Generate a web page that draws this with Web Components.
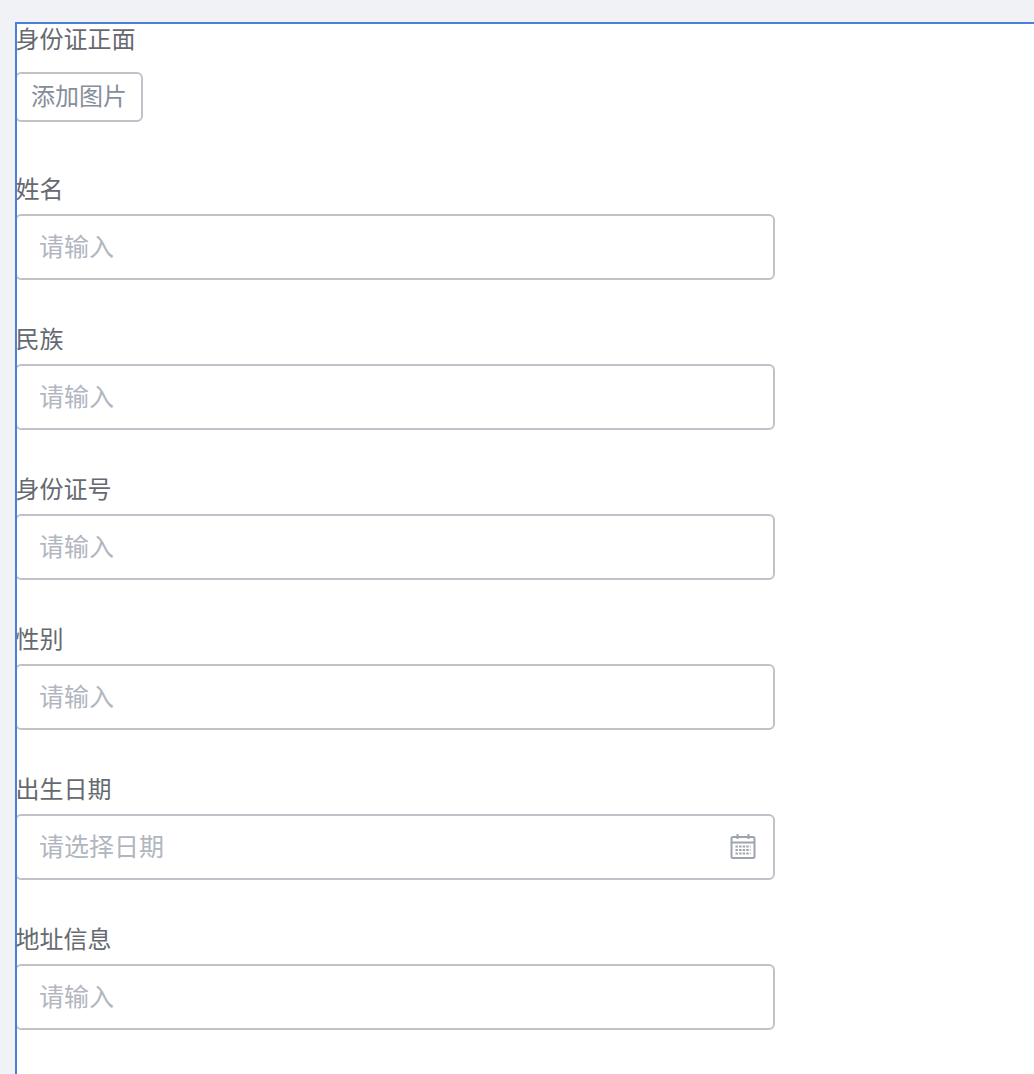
<!DOCTYPE html>
<html lang="zh">
<head>
<meta charset="utf-8">
<title>身份信息</title>
<style>
    html, body {
        margin: 0;
        height: 100%;
        overflow: hidden;
        background: #f1f2f5;
    }
    body {
        padding: 22px 0 0 15px;
        box-sizing: border-box;
        font-family: "Liberation Sans", "Noto Sans CJK SC", sans-serif;
    }
</style>
</head>
<body>
<id-form>
    <form-row label="身份证正面" class="first"><upload-button>添加图片</upload-button></form-row>
    <form-row label="姓名"><text-field placeholder="请输入"></text-field></form-row>
    <form-row label="民族"><text-field placeholder="请输入"></text-field></form-row>
    <form-row label="身份证号"><text-field placeholder="请输入"></text-field></form-row>
    <form-row label="性别"><text-field placeholder="请输入"></text-field></form-row>
    <form-row label="出生日期"><text-field placeholder="请选择日期" date></text-field></form-row>
    <form-row label="地址信息"><text-field placeholder="请输入"></text-field></form-row>
</id-form>

<script>
class IdForm extends HTMLElement {
    constructor() {
        super();
        this.shadowDOM = this.attachShadow({mode: "open"});
        this.shadowDOM.innerHTML = `
            <style>
                :host {
                    position: relative;
                    display: flex;
                    flex-direction: column;
                    width: 1100px;
                    min-height: 1100px;
                    box-sizing: border-box;
                    padding-top: 2px;
                    background: #fff;
                }
                /* selection frame sits over the rows */
                :host::after {
                    content: "";
                    position: absolute;
                    top: 0;
                    right: 0;
                    bottom: 0;
                    left: 0;
                    z-index: 1;
                    border-top: 2px solid #4a7fdc;
                    border-left: 2px solid #4a7fdc;
                    pointer-events: none;
                }
            </style>
            <slot></slot>
        `;
    }
}
customElements.define("id-form", IdForm);

class FormRow extends HTMLElement {
    constructor() {
        super();
        this.shadowDOM = this.attachShadow({mode: "open"});
    }

    connectedCallback() {
        this.render();
    }

    render() {
        this.shadowDOM.innerHTML = `
            <style>
                :host {
                    display: flex;
                    flex-direction: column;
                    margin-top: 44px;
                    gap: 8px;
                }
                :host(.first) {
                    margin-top: 0;
                    margin-bottom: 8px;
                    gap: 16px;
                }
                .label {
                    height: 32px;
                    line-height: 32px;
                    padding-left: 0.5px;
                    font-size: 24px;
                    color: #666a70;
                    white-space: nowrap;
                }
            </style>
            <div class="label">${this.getAttribute("label")}</div>
            <slot></slot>
        `;
    }
}
customElements.define("form-row", FormRow);

class UploadButton extends HTMLElement {
    constructor() {
        super();
        this.shadowDOM = this.attachShadow({mode: "open"});
        this.shadowDOM.innerHTML = `
            <style>
                :host {
                    display: block;
                    width: 128px;
                    height: 50px;
                    box-sizing: border-box;
                    padding: 0 14px;
                    border: 2px solid #bfc3c9;
                    border-radius: 6px;
                    background: #fff;
                    font-size: 24px;
                    line-height: 46px;
                    color: #868e9b;
                    white-space: nowrap;
                }
            </style>
            <slot></slot>
        `;
    }
}
customElements.define("upload-button", UploadButton);

class TextField extends HTMLElement {
    constructor() {
        super();
        this.shadowDOM = this.attachShadow({mode: "open"});
    }

    connectedCallback() {
        this.render();
    }

    render() {
        const icon = this.hasAttribute("date") ? `
            <svg viewBox="0 0 26 26" width="26" height="26" fill="none" stroke="#9ea4ae" stroke-width="2">
                <rect x="1.5" y="4" width="23" height="21" rx="1.5"/>
                <path d="M1.5 9.5h23M7.5 1v5M18.5 1v5"/>
                <path stroke-width="2.2" stroke-dasharray="2.4 1.2" d="M5.5 13.5h15M5.5 17h15M5.5 20.5h15"/>
            </svg>` : "";
        this.shadowDOM.innerHTML = `
            <style>
                :host {
                    display: flex;
                    align-items: center;
                    justify-content: space-between;
                    width: 760px;
                    height: 66px;
                    box-sizing: border-box;
                    padding: 0 17px 0 22px;
                    border: 2px solid #bfc3c9;
                    border-radius: 6px;
                    background: #fff;
                }
                .placeholder {
                    font-size: 25px;
                    line-height: 30px;
                    margin-top: -1px;
                    color: #b1b6c0;
                    white-space: nowrap;
                }
                svg {
                    display: block;
                    margin-top: -2px;
                }
            </style>
            <span class="placeholder">${this.getAttribute("placeholder")}</span>
            ${icon}
        `;
    }
}
customElements.define("text-field", TextField);
</script>
</body>
</html>
